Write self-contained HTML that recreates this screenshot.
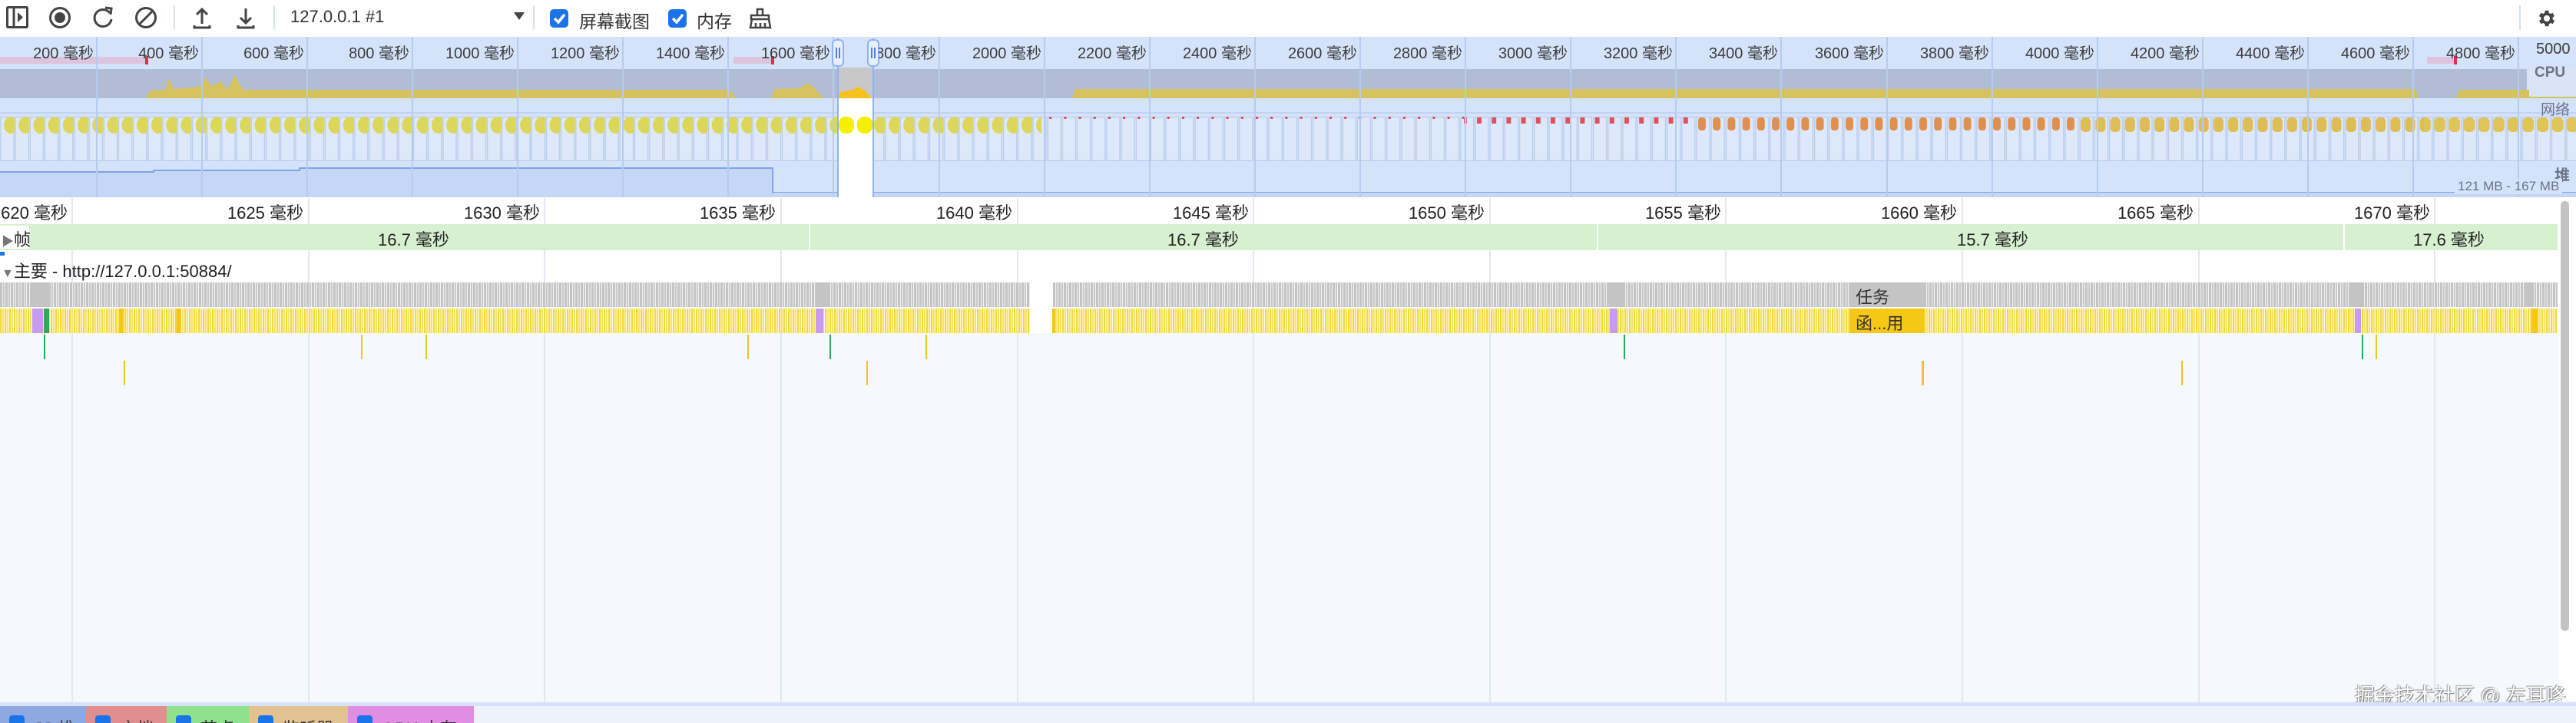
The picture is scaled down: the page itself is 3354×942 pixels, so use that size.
<!DOCTYPE html>
<html><head><meta charset="utf-8"><style>
*{margin:0;padding:0;box-sizing:border-box}
body{width:3354px;height:942px;overflow:hidden;background:#fff;font-family:"Liberation Sans","Noto Sans CJK SC",sans-serif;color:#333;position:relative}
.a{position:absolute}
.lbl{position:absolute;font-size:20px;color:#3c3c3c;white-space:nowrap;text-align:right;width:200px;top:53px}
.rl{position:absolute;font-size:22px;color:#222;white-space:nowrap;text-align:right;width:200px;top:260px}
.vl{position:absolute;top:258px;height:662px;width:2px;background:#e2e7f1}
.cb{position:absolute;width:24px;height:24px;border-radius:5px;background:#1a73e8}
.lg{position:absolute;top:920px;height:22px;overflow:hidden;font-size:22px;color:#333}
.lg i{position:absolute;left:12px;top:12px;width:20px;height:20px;border-radius:4px;background:#1a73e8}
.lg span{position:absolute;left:44px;top:12px;white-space:nowrap}
</style></head><body>
<!-- toolbar -->
<svg class="a" style="left:0;top:0" width="1010" height="47" fill="none" stroke="#444" stroke-width="3">
<rect x="9.5" y="9.5" width="26" height="26" rx="1"/><line x1="18" y1="9" x2="18" y2="36"/><path d="M23 16 L30 22.5 L23 29Z" fill="#444" stroke="none"/>
<circle cx="78" cy="23" r="12.5"/><circle cx="78" cy="23" r="7" fill="#444" stroke="none"/>
<path d="M143 17 A11 11 0 1 0 145 25"/><path d="M137 10 L145 11 L144 19" />
<circle cx="190" cy="23" r="12.5"/><line x1="181" y1="32" x2="199" y2="14"/>
<line x1="227" y1="7" x2="227" y2="38" stroke="#d5e0f0" stroke-width="2"/>
<path d="M263 31 L263 12 M256 19 L263 12 L270 19 M253 33 V36 H273 V33"/>
<path d="M320 11 L320 30 M313 23 L320 30 L327 23 M310 33 V36 H330 V33"/>
<line x1="357" y1="7" x2="357" y2="38" stroke="#d5e0f0" stroke-width="2"/>
<path d="M669 16 H683 L676 26Z" fill="#444" stroke="none"/>
<line x1="695" y1="7" x2="695" y2="38" stroke="#d5e0f0" stroke-width="2"/>
<path d="M986 20 V12 H993 V20 M978 20 H1001 V25 H978Z M979 25 L977 36 H1003 L1001 25 M984 30 V36 M990 30 V36 M996 30 V36" stroke-width="2.5"/>
</svg>
<div class="a" style="left:378px;top:9px;font-size:22px;color:#333">127.0.0.1 #1</div>
<div class="cb" style="left:716px;top:12px"></div>
<div class="cb" style="left:870px;top:12px"></div>
<svg class="a" style="left:0;top:0" width="1000" height="47" fill="none" stroke="#fff" stroke-width="3.5"><path d="M722 24 L727 29 L735 19"/><path d="M876 24 L881 29 L889 19"/></svg>
<div class="a" style="left:754px;top:9px;font-size:23px;color:#333">屏幕截图</div>
<div class="a" style="left:907px;top:9px;font-size:23px;color:#333">内存</div>
<div class="a" style="left:3280px;top:7px;width:2px;height:32px;background:#d5e0f0"></div>
<svg class="a" style="left:3302px;top:10px" width="28" height="28" viewBox="0 0 24 24"><path fill="#444" d="M19.4 13a7.5 7.5 0 0 0 0-2l2.1-1.6-2-3.5-2.5 1a7 7 0 0 0-1.7-1L15 3.2h-4l-.4 2.7a7 7 0 0 0-1.7 1l-2.5-1-2 3.5L6.6 11a7.5 7.5 0 0 0 0 2l-2.1 1.6 2 3.5 2.5-1a7 7 0 0 0 1.7 1l.4 2.7h4l.4-2.7a7 7 0 0 0 1.7-1l2.5 1 2-3.5zM13 15.5a3.5 3.5 0 1 1 0-7 3.5 3.5 0 0 1 0 7z" transform="translate(-1 0)"/></svg>

<!-- overview -->
<svg class="a" style="left:0;top:0" width="3354" height="260">
<defs>
<pattern id="fb" x="0" y="152" width="19.2" height="58" patternUnits="userSpaceOnUse"><rect x="1" y="0.6" width="17" height="56.8" fill="#dde8fb" stroke="#b8cbea" stroke-width="1.2"/></pattern>
<pattern id="dy" x="0" y="150" width="19.2" height="26" patternUnits="userSpaceOnUse"><ellipse cx="14" cy="13" rx="9" ry="11" fill="#dcd75a"/></pattern>
<pattern id="dr" x="0" y="150" width="19.2" height="10" patternUnits="userSpaceOnUse"><rect x="3" y="2" width="3" height="3" fill="#e04a5a"/></pattern>
<pattern id="dr2" x="0" y="150" width="19.2" height="14" patternUnits="userSpaceOnUse"><rect x="3" y="3" width="6" height="8" fill="#e0505a"/></pattern>
<pattern id="do" x="0" y="150" width="19.2" height="24" patternUnits="userSpaceOnUse"><rect x="3" y="3" width="10" height="17" rx="4" fill="#e0904e"/></pattern>
<pattern id="dyo" x="0" y="150" width="19.2" height="24" patternUnits="userSpaceOnUse"><rect x="2" y="3" width="13" height="19" rx="5" fill="#dfbd55"/></pattern>
<pattern id="dy2" x="0" y="150" width="19.2" height="24" patternUnits="userSpaceOnUse"><rect x="1" y="3" width="15" height="19" rx="6" fill="#dfc558"/></pattern>
</defs>
<rect x="0" y="48" width="3354" height="209" fill="#d5e3fa"/>
<rect x="0" y="152" width="3354" height="58" fill="url(#fb)"/>
<line x1="0" y1="147" x2="3354" y2="147" stroke="#c2d3ef" stroke-width="2"/>
<!-- cpu -->
<path d="M0 90 H3290 V128 H0Z" fill="#b1bdd5"/>
<path d="M190 128 L195 118 L215 117 L220 103 L226 116 L250 114 L262 112 L268 100 L275 113 L288 106 L296 117 L306 98 L316 117 L950 117 L958 128Z" fill="#d6c25e"/>
<path d="M1004 128 L1008 116 L1040 115 L1052 108 L1062 116 L1072 128Z" fill="#d6c25e"/>
<path d="M1396 128 L1400 116 L3145 116 L3149 128Z" fill="#d6c25e"/>
<path d="M3198 128 L3202 117 L3354 117 L3354 128Z" fill="#d6c25e"/>
<rect x="3293" y="88" width="61" height="38" fill="#d9e4f7"/>
<!-- pink markers -->
<rect x="0" y="74" width="190" height="9" fill="#dcc4dc"/><rect x="189" y="73" width="4" height="11" fill="#d9304c"/>
<rect x="955" y="74" width="50" height="9" fill="#dcc4dc"/><rect x="1004" y="73" width="4" height="11" fill="#d9304c"/>
<rect x="3160" y="74" width="36" height="9" fill="#dcc4dc"/><rect x="3195" y="73" width="4" height="11" fill="#d9304c"/>
<!-- dots -->
<rect x="0" y="150" width="1356" height="26" fill="url(#dy)"/>
<rect x="1356" y="150" width="550" height="10" fill="url(#dr)"/>
<rect x="1906" y="150" width="300" height="14" fill="url(#dr2)"/>
<rect x="2206" y="150" width="500" height="24" fill="url(#do)"/>
<rect x="2706" y="150" width="450" height="24" fill="url(#dyo)"/>
<rect x="3156" y="150" width="198" height="24" fill="url(#dy2)"/>
<!-- heap -->
<path d="M0 224 H200 V222 H390 V219 H1006 V257 H0Z" fill="#c5d7f7"/>
<path d="M0 224 H200 V222 H390 V219 H1006 V251 H3354" fill="none" stroke="#7ea3e6" stroke-width="2"/>
<rect x="1006" y="251" width="2348" height="6" fill="#c5d7f7"/>
<!-- ticks -->
<g stroke="#b5cbef" stroke-width="2">
<line x1="126" y1="48" x2="126" y2="257"/><line x1="263" y1="48" x2="263" y2="257"/><line x1="400" y1="48" x2="400" y2="257"/><line x1="537" y1="48" x2="537" y2="257"/><line x1="674" y1="48" x2="674" y2="257"/><line x1="811" y1="48" x2="811" y2="257"/><line x1="948" y1="48" x2="948" y2="257"/><line x1="1085" y1="48" x2="1085" y2="257"/><line x1="1223" y1="48" x2="1223" y2="257"/><line x1="1360" y1="48" x2="1360" y2="257"/><line x1="1497" y1="48" x2="1497" y2="257"/><line x1="1634" y1="48" x2="1634" y2="257"/><line x1="1771" y1="48" x2="1771" y2="257"/><line x1="1908" y1="48" x2="1908" y2="257"/><line x1="2045" y1="48" x2="2045" y2="257"/><line x1="2182" y1="48" x2="2182" y2="257"/><line x1="2319" y1="48" x2="2319" y2="257"/><line x1="2457" y1="48" x2="2457" y2="257"/><line x1="2594" y1="48" x2="2594" y2="257"/><line x1="2731" y1="48" x2="2731" y2="257"/><line x1="2868" y1="48" x2="2868" y2="257"/><line x1="3005" y1="48" x2="3005" y2="257"/><line x1="3142" y1="48" x2="3142" y2="257"/><line x1="3279" y1="48" x2="3279" y2="257"/>
</g>
<!-- selection -->
<rect x="1091" y="88" width="46" height="169" fill="#fff"/>
<rect x="1091" y="88" width="46" height="40" fill="#c8c8c8"/>
<path d="M1091 128 L1094 120 L1110 117 L1118 113 L1126 118 L1135 128Z" fill="#f5c11e"/>
<rect x="1092" y="152" width="20" height="22" rx="9" fill="#f5f000"/><rect x="1116" y="152" width="20" height="22" rx="9" fill="#f5f000"/>
<line x1="1091" y1="50" x2="1091" y2="257" stroke="#8fb3ef" stroke-width="2"/><line x1="1137" y1="50" x2="1137" y2="257" stroke="#8fb3ef" stroke-width="2"/>
<rect x="1084" y="52" width="14" height="34" rx="5" fill="#e6effd" stroke="#8fb3ef" stroke-width="2"/>
<rect x="1130" y="52" width="14" height="34" rx="5" fill="#e6effd" stroke="#8fb3ef" stroke-width="2"/>
<path d="M1089 62 V76 M1093 62 V76 M1135 62 V76 M1139 62 V76" stroke="#1a5fd0" stroke-width="1.5"/>
</svg>
<div class="lbl" style="left:-78px">200 毫秒</div><div class="lbl" style="left:59px">400 毫秒</div><div class="lbl" style="left:196px">600 毫秒</div><div class="lbl" style="left:333px">800 毫秒</div><div class="lbl" style="left:470px">1000 毫秒</div><div class="lbl" style="left:607px">1200 毫秒</div><div class="lbl" style="left:744px">1400 毫秒</div><div class="lbl" style="left:881px">1600 毫秒</div><div class="lbl" style="left:1019px;clip-path:inset(0 0 0 125px)">1800 毫秒</div><div class="lbl" style="left:1156px">2000 毫秒</div><div class="lbl" style="left:1293px">2200 毫秒</div><div class="lbl" style="left:1430px">2400 毫秒</div><div class="lbl" style="left:1567px">2600 毫秒</div><div class="lbl" style="left:1704px">2800 毫秒</div><div class="lbl" style="left:1841px">3000 毫秒</div><div class="lbl" style="left:1978px">3200 毫秒</div><div class="lbl" style="left:2115px">3400 毫秒</div><div class="lbl" style="left:2253px">3600 毫秒</div><div class="lbl" style="left:2390px">3800 毫秒</div><div class="lbl" style="left:2527px">4000 毫秒</div><div class="lbl" style="left:2664px">4200 毫秒</div><div class="lbl" style="left:2801px">4400 毫秒</div><div class="lbl" style="left:2938px">4600 毫秒</div><div class="lbl" style="left:3075px">4800 毫秒</div><div class="a" style="left:3302px;top:53px;font-size:20px;color:#3c3c3c">5000</div>
<div class="a" style="left:3300px;top:84px;font-size:19px;font-weight:bold;color:#6a7488">CPU</div>
<div class="a" style="left:3308px;top:128px;font-size:19px;color:#6a7488">网络</div>
<div class="a" style="left:3326px;top:212px;font-size:20px;font-weight:bold;color:#6a7488">堆</div>
<div class="a" style="left:3196px;top:233px;font-size:17px;color:#6a7488;background:#d5e3fa;padding:0 4px">121 MB - 167 MB</div>

<!-- details -->
<div class="a" style="left:0;top:258px;width:3354px;height:662px;background:#fff"></div>
<div class="a" style="left:0;top:434px;width:3332px;height:483px;background:#f5f8fc"></div>
<div class="vl" style="left:93px"></div><div class="vl" style="left:401px"></div><div class="vl" style="left:708px"></div><div class="vl" style="left:1016px"></div><div class="vl" style="left:1324px"></div><div class="vl" style="left:1631px"></div><div class="vl" style="left:1939px"></div><div class="vl" style="left:2246px"></div><div class="vl" style="left:2554px"></div><div class="vl" style="left:2862px"></div><div class="vl" style="left:3169px"></div>
<div class="rl" style="left:-112px">620 毫秒</div><div class="rl" style="left:195px">1625 毫秒</div><div class="rl" style="left:503px">1630 毫秒</div><div class="rl" style="left:810px">1635 毫秒</div><div class="rl" style="left:1118px">1640 毫秒</div><div class="rl" style="left:1426px">1645 毫秒</div><div class="rl" style="left:1733px">1650 毫秒</div><div class="rl" style="left:2041px">1655 毫秒</div><div class="rl" style="left:2348px">1660 毫秒</div><div class="rl" style="left:2656px">1665 毫秒</div><div class="rl" style="left:2964px">1670 毫秒</div>
<!-- frames -->
<div class="a" style="left:0;top:292px;width:3330px;height:34px;background:#d6f0d0"></div>
<div class="a" style="left:1053px;top:292px;width:2px;height:34px;background:#fff"></div>
<div class="a" style="left:2079px;top:292px;width:2px;height:34px;background:#fff"></div>
<div class="a" style="left:3051px;top:292px;width:2px;height:34px;background:#fff"></div>
<div class="a" style="left:0;top:294px;width:38px;height:30px;background:#fff"></div>
<div class="a" style="left:2px;top:295px;font-size:22px;color:#222"><span style="color:#777;font-size:16px">▶</span>帧</div>
<div class="a" style="left:492px;top:295px;font-size:22px;color:#222">16.7 毫秒</div>
<div class="a" style="left:1520px;top:295px;font-size:22px;color:#222">16.7 毫秒</div>
<div class="a" style="left:2548px;top:295px;font-size:22px;color:#222">15.7 毫秒</div>
<div class="a" style="left:3142px;top:295px;font-size:22px;color:#222">17.6 毫秒</div>
<div class="a" style="left:0;top:328px;width:6px;height:5px;background:#1a73e8"></div>
<div class="a" style="left:2px;top:336px;font-size:22px;color:#222"><span style="color:#777;font-size:16px">▼</span>主要 - http://127.0.0.1:50884/</div>
<!-- task rows -->
<div class="a" style="left:0;top:368px;width:1341px;height:32px;background:repeating-linear-gradient(90deg,#c4c4c4 0 3px,#eeeeee 3px 4px,#c9c9c9 4px 6px,#f2f2f2 6px 7px)"></div>
<div class="a" style="left:1371px;top:368px;width:1959px;height:32px;background:repeating-linear-gradient(90deg,#c4c4c4 0 3px,#eeeeee 3px 4px,#c9c9c9 4px 6px,#f2f2f2 6px 7px)"></div>
<div class="a" style="left:0;top:402px;width:1341px;height:32px;background:repeating-linear-gradient(90deg,#f2d93e 0 2px,#fcf3b0 2px 3px,#f6e270 3px 5px,#fffbe6 5px 6px)"></div>
<div class="a" style="left:1371px;top:402px;width:1959px;height:32px;background:repeating-linear-gradient(90deg,#f2d93e 0 2px,#fcf3b0 2px 3px,#f6e270 3px 5px,#fffbe6 5px 6px)"></div>
<div class="a" style="left:40px;top:368px;width:24px;height:32px;background:#c4c4c4"></div>
<div class="a" style="left:1062px;top:368px;width:18px;height:32px;background:#c4c4c4"></div>
<div class="a" style="left:2094px;top:368px;width:22px;height:32px;background:#c4c4c4"></div>
<div class="a" style="left:3060px;top:368px;width:18px;height:32px;background:#c4c4c4"></div>
<div class="a" style="left:3288px;top:368px;width:10px;height:32px;background:#c4c4c4"></div>
<div class="a" style="left:2408px;top:368px;width:99px;height:32px;background:#c4c4c4;font-size:22px;color:#333;padding:2px 0 0 8px">任务</div>
<div class="a" style="left:2408px;top:402px;width:97px;height:32px;background:#f6c714;font-size:22px;color:#333;padding:2px 0 0 8px">函...用</div>
<div class="a" style="left:42px;top:402px;width:14px;height:32px;background:#c89af0"></div>
<div class="a" style="left:57px;top:402px;width:7px;height:32px;background:#2faa5a"></div>
<div class="a" style="left:1062px;top:402px;width:10px;height:32px;background:#c89af0"></div>
<div class="a" style="left:2096px;top:402px;width:10px;height:32px;background:#c89af0"></div>
<div class="a" style="left:3066px;top:402px;width:8px;height:32px;background:#c89af0"></div>
<div class="a" style="left:155px;top:402px;width:6px;height:32px;background:#f6c714"></div>
<div class="a" style="left:230px;top:402px;width:5px;height:32px;background:#f6c714"></div>
<div class="a" style="left:3296px;top:402px;width:8px;height:32px;background:#f6c714"></div>
<div class="a" style="left:1370px;top:402px;width:4px;height:32px;background:#f6c714"></div>
<!-- small flame lines -->
<div class="a" style="left:57px;top:436px;width:2px;height:32px;background:#2faa5a"></div>
<div class="a" style="left:161px;top:470px;width:2px;height:32px;background:#f2c520"></div>
<div class="a" style="left:470px;top:436px;width:2px;height:32px;background:#f2c520"></div>
<div class="a" style="left:554px;top:436px;width:2px;height:32px;background:#f2c520"></div>
<div class="a" style="left:973px;top:436px;width:2px;height:32px;background:#f2c520"></div>
<div class="a" style="left:1080px;top:436px;width:2px;height:32px;background:#2faa5a"></div>
<div class="a" style="left:1128px;top:470px;width:2px;height:32px;background:#f2c520"></div>
<div class="a" style="left:1205px;top:436px;width:2px;height:32px;background:#f2c520"></div>
<div class="a" style="left:2114px;top:436px;width:2px;height:32px;background:#2faa5a"></div>
<div class="a" style="left:2502px;top:470px;width:3px;height:32px;background:#f2c520"></div>
<div class="a" style="left:2840px;top:470px;width:2px;height:32px;background:#f2c520"></div>
<div class="a" style="left:3075px;top:436px;width:2px;height:32px;background:#2faa5a"></div>
<div class="a" style="left:3093px;top:436px;width:2px;height:32px;background:#f2c520"></div>
<!-- scrollbar -->
<div class="a" style="left:3334px;top:262px;width:11px;height:560px;border-radius:6px;background:#c3c3c3"></div>
<!-- watermark -->
<div class="a" style="left:3066px;top:886px;font-size:26px;color:#fff;text-shadow:1px 1px 1px #777,-1px -1px 1px #999">掘金技术社区 @ 左耳咚</div>
<!-- bottom -->
<div class="a" style="left:0;top:915px;width:3354px;height:5px;background:#d6e2f8"></div>
<div class="a" style="left:0;top:920px;width:3354px;height:22px;background:#eef2fa"></div>
<div class="lg" style="left:0;width:112px;background:#8ea8e2"><i></i><span>JS 堆</span></div>
<div class="lg" style="left:112px;width:105px;background:#e08e8e"><i></i><span>文档</span></div>
<div class="lg" style="left:217px;width:107px;background:#8ee28e"><i></i><span>节点</span></div>
<div class="lg" style="left:324px;width:129px;background:#e2c290"><i></i><span>监听器</span></div>
<div class="lg" style="left:453px;width:164px;background:#e08ee2"><i></i><span>GPU 内存</span></div>
</body></html>
